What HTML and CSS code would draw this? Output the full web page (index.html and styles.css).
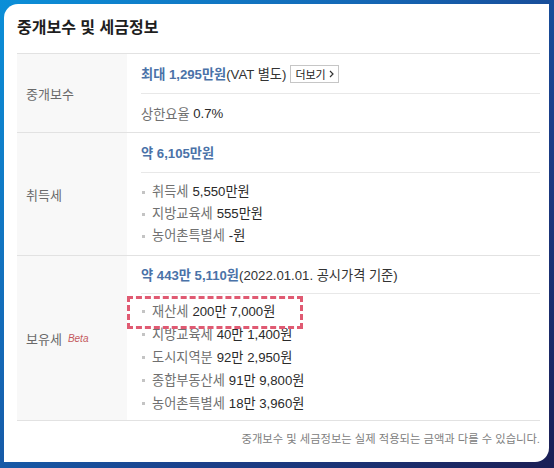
FILE: index.html
```html
<!DOCTYPE html>
<html lang="ko">

<head>
  <meta charset="UTF-8">
  <meta name="viewport" content="width=device-width, initial-scale=1.0">
  <title>중개보수 및 세금정보</title>
  <link rel="stylesheet" href="styles.css">
</head>

<body>
  <div class="card">
    <h2 class="card-title">중개보수 및 세금정보</h2>

    <div class="tax-table">
      <!-- 중개보수 -->
      <div class="tax-row">
        <div class="tax-label">중개보수</div>
        <div class="tax-body">
          <div class="tax-head">
            <span class="amount">최대 1,295만원</span>(VAT 별도)
            <button class="more-btn">더보기
              <svg width="5" height="8" viewBox="0 0 5 8"><path d="M1 1l3 3-3 3" fill="none" stroke="#333" stroke-width="1.2"/></svg>
            </button>
          </div>
          <div class="tax-head">
            <span class="sub-label">상한요율</span>&nbsp;<span class="val">0.7%</span>
          </div>
        </div>
      </div>

      <!-- 취득세 -->
      <div class="tax-row">
        <div class="tax-label">취득세</div>
        <div class="tax-body">
          <div class="tax-head"><span class="amount">약 6,105만원</span></div>
          <ul class="tax-list">
            <li><span class="sub-label">취득세</span> <span class="val">5,550만원</span></li>
            <li><span class="sub-label">지방교육세</span> <span class="val">555만원</span></li>
            <li><span class="sub-label">농어촌특별세</span> <span class="val">-원</span></li>
          </ul>
        </div>
      </div>

      <!-- 보유세 -->
      <div class="tax-row">
        <div class="tax-label">보유세 <em class="beta">Beta</em></div>
        <div class="tax-body">
          <div class="tax-head tax-head-short">
            <span class="amount">약 443만 5,110원</span>(2022.01.01. 공시가격 기준)
          </div>
          <ul class="tax-list tax-list-long">
            <li class="marked"><span class="sub-label">재산세</span> <span class="val">200만 7,000원</span></li>
            <li><span class="sub-label">지방교육세</span> <span class="val">40만 1,400원</span></li>
            <li><span class="sub-label">도시지역분</span> <span class="val">92만 2,950원</span></li>
            <li><span class="sub-label">종합부동산세</span> <span class="val">91만 9,800원</span></li>
            <li><span class="sub-label">농어촌특별세</span> <span class="val">18만 3,960원</span></li>
          </ul>
        </div>
      </div>
    </div>

    <p class="card-note">중개보수 및 세금정보는 실제 적용되는 금액과 다를 수 있습니다.</p>
  </div>
</body>

</html>
```

FILE: styles.css
```css
* {
  box-sizing: border-box;
  margin: 0;
  padding: 0;
  font-family: 'Liberation Sans', 'Noto Sans CJK KR', sans-serif;
}

body {
  width: 554px;
  height: 468px;
  overflow: hidden;
  background: linear-gradient(135deg, #0b8fd8 0%, #1468b6 35%, #1a3f8a 65%, #1b1f55 100%);
}

.card {
  margin: 4px 5px 6px 4px;
  height: 458px;
  padding: 0 9px 0 13px;
  background: #fff;
  border-radius: 14px 0 14px 0;
}

.card-title {
  padding: 14px 0 15px;
  font-size: 16px;
  line-height: 20px;
  font-weight: 700;
  color: #1e1e1e;
}

.tax-table {
  border-top: 1px solid #e2e2e2;
}

.tax-row {
  display: grid;
  grid-template-columns: 110px 1fr;
  border-bottom: 1px solid #e2e2e2;
}

.tax-label {
  display: flex;
  align-items: center;
  gap: 6px;
  padding-left: 9px;
  background: #f8f8f8;
  font-size: 13px;
  color: #6a6a6a;
}

.beta {
  font-size: 10px;
  color: #c45a5f;
  font-style: italic;
}

.tax-body {
  padding-left: 14px;
  font-size: 13.2px;
  color: #333;
}

.tax-head {
  display: flex;
  align-items: center;
  height: 40px;
  border-bottom: 1px solid #e8e8e8;
}

.tax-head:last-child {
  border-bottom: none;
  height: 38px;
}

.tax-head-short {
  height: 38px;
}

.amount {
  color: #4a72a8;
  font-weight: 700;
}

.more-btn {
  display: inline-flex;
  align-items: center;
  gap: 3px;
  height: 18px;
  margin-left: 4px;
  padding: 0 4px;
  border: 1px solid #c6c6c6;
  background: #fff;
  font-size: 11px;
  color: #222;
}

.sub-label {
  color: #707070;
}

.val {
  color: #2a2a2a;
}

.tax-list {
  list-style: none;
  padding: 8px 0;
  line-height: 22px;
}

.tax-list-long {
  padding: 6px 0 5px;
  line-height: 23px;
}

.tax-list li {
  display: flex;
  align-items: center;
  gap: 4px;
}

.tax-list li::before {
  content: '';
  width: 3px;
  height: 3px;
  margin: 0 3px 0 1px;
  background: #c4c4c4;
}

.tax-list .marked {
  position: relative;
}

/* 강조 점선 박스 */
.tax-list .marked::after {
  content: '';
  position: absolute;
  left: -14px;
  top: -4px;
  width: 170px;
  height: 27px;
  border: 3px dashed #e05a72;
}

.card-note {
  padding-top: 9px;
  text-align: right;
  font-size: 11.3px;
  color: #808080;
}
```
